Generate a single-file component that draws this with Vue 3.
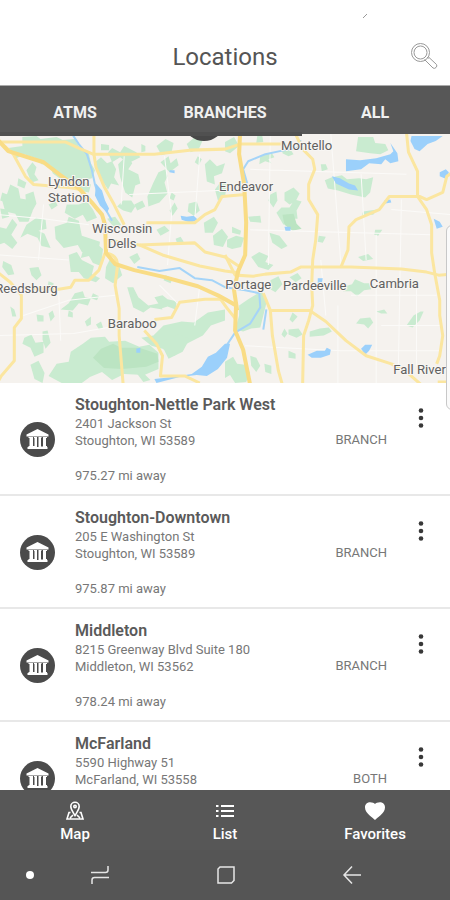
<template>
  <div class="app">
    <header class="header">
      <h1>Locations</h1>
      <button type="button" class="search-btn" aria-label="Search">
        <svg viewBox="0 0 28 28" width="28" height="28">
          <circle cx="10.500" cy="10.500" r="9" />
          <circle cx="10.500" cy="10.500" r="6.500" />
          <path d="M14.500 17.500l8.500 8.500q1.500 1 3-.5t.5-3L18 14.500M17 15l1.500 1.500" />
        </svg>
        <svg class="spark" viewBox="0 0 6 6" width="6" height="6"><path d="M1 5l4-4" /></svg>
      </button>
    </header>

    <nav class="tabs">
      <button v-for="tab in tabs" :key="tab" type="button" :class="{ active: tab === activeTab }" @click="activeTab = tab">
        {{ tab }}
      </button>
    </nav>

    <section class="map" aria-label="Map">
      <svg viewBox="0 0 450 247" preserveAspectRatio="xMidYMid slice">
        <rect width="450" height="249" fill="#f5f2ee" />
        <path v-for="(d, i) in woods" :key="'w' + i" class="wood" :d="d" />
        <path class="wood dark" d="M94 222l8-9 12-5 8 4 18 0 18 6 1 8-12 5-24 2-18-1zM282 80l11-1 3 10 5 5-9 2-8-6z" />
        <path class="minor" :d="minorRoads" />
        <path v-for="(d, i) in rivers" :key="'r' + i" class="river" :d="d" />
        <path v-for="(d, i) in lakes" :key="'l' + i" class="lake" :d="d" />
        <path v-for="(d, i) in roads" :key="'o' + i" class="road" :d="d" />
        <path v-for="(d, i) in highways" :key="'h' + i" class="highway" :d="d" />
        <g class="places">
          <text v-for="p in places" :key="p.name" :x="p.x" :y="p.y">{{ p.name }}</text>
        </g>
      </svg>
    </section>

    <ul class="list">
      <li v-for="item in locations" :key="item.name" class="row">
        <span class="badge">
          <svg viewBox="0 0 35 35" width="35" height="35">
            <circle cx="17.500" cy="17.500" r="17.500" fill="#4b4b4b" />
            <path fill="#fff" d="M17.500 7L28.500 12.500v2h-22v-2zM8.500 15h4.500v9h1v1H8.500v-1h1v-8h-1zM14 15h3v10h-3v-1h.5v-8H14zM18.500 15h3v1H21v8h.5v1h-3zM23 15h4v1h-1v8h1v1h-4.500v-1h.5zM7.500 25h20v2h-20z" />
          </svg>
        </span>
        <div class="info">
          <h2>{{ item.name }}</h2>
          <p>{{ item.street }}</p>
          <p>{{ item.city }}</p>
          <p v-if="item.distance" class="distance">{{ item.distance }} mi away</p>
        </div>
        <span class="type">{{ item.type }}</span>
        <button type="button" class="more" :aria-label="'Options for ' + item.name">
          <svg viewBox="0 0 6 20" width="6" height="20">
            <circle cx="3" cy="2.500" r="2.300" /><circle cx="3" cy="10" r="2.300" /><circle cx="3" cy="17.500" r="2.300" />
          </svg>
        </button>
      </li>
    </ul>

    <nav class="bottom-nav">
      <button type="button">
        <svg viewBox="0 0 20 20" width="20" height="20" fill="none" stroke="#fff" stroke-width="1.600">
          <path d="M10 14.500C8 11 5.800 8.500 5.800 5.500a4.200 4.200 0 0 1 8.400 0C14.200 8.500 12 11 10 14.500z" />
          <circle cx="10" cy="5.500" r="1.200" />
          <path d="M5.500 11.500H4L2 18h16l-2-6.500h-1.500M5 17l3-3M15 17l-3-3" />
        </svg>
        <span>Map</span>
      </button>
      <button type="button">
        <svg viewBox="0 0 20 20" width="20" height="20" fill="none" stroke="#fff" stroke-width="2">
          <path d="M1 5h2.500M1 10h2.500M1 15h2.500M6 5h13M6 10h13M6 15h13" />
        </svg>
        <span>List</span>
      </button>
      <button type="button">
        <svg viewBox="0 0 20 20" width="20" height="20" fill="#fff">
          <path d="M10 19C8.500 17 0 12.500 0 6.500 0 3.500 2 1.300 5 1.300c2.500 0 4 .7 5 1.700 1-1 2.500-1.700 5-1.700 3 0 5 2.200 5 5.200C20 12.500 11.500 17 10 19z" />
        </svg>
        <span>Favorites</span>
      </button>
    </nav>

    <div class="system-nav">
      <span class="dot"></span>
      <div class="keys">
        <button type="button" aria-label="Recent apps">
          <svg viewBox="0 0 20 20" width="20" height="20"><path d="M1 7.500h14.500q2.500 0 2.500-2.500V1M19 12.500H4.500Q2 12.500 2 15v4" /></svg>
        </button>
        <button type="button" aria-label="Home">
          <svg viewBox="0 0 20 20" width="20" height="20"><path d="M4 2h14v13.500L15.500 18H2V4z" /></svg>
        </button>
        <button type="button" aria-label="Back">
          <svg viewBox="0 0 20 20" width="20" height="20"><path d="M19 10H2M10 1.500L2 10l8 8.500" /></svg>
        </button>
      </div>
    </div>

    <div class="edge-handle"></div>
  </div>
</template>

<script setup>
import { ref } from 'vue';

const tabs = ['ATMS', 'BRANCHES', 'ALL'];
const activeTab = ref('BRANCHES');

const locations = [
  { name: 'Stoughton-Nettle Park West', street: '2401 Jackson St', city: 'Stoughton, WI 53589', distance: '975.27', type: 'BRANCH' },
  { name: 'Stoughton-Downtown', street: '205 E Washington St', city: 'Stoughton, WI 53589', distance: '975.87', type: 'BRANCH' },
  { name: 'Middleton', street: '8215 Greenway Blvd Suite 180', city: 'Middleton, WI 53562', distance: '978.24', type: 'BRANCH' },
  { name: 'McFarland', street: '5590 Highway 51', city: 'McFarland, WI 53558', type: 'BOTH' },
];

const places = [
  { name: 'Montello', x: 306, y: 16 },
  { name: 'Lyndon', x: 70, y: 52 },
  { name: 'Station', x: 70, y: 67 },
  { name: 'Endeavor', x: 246, y: 57 },
  { name: 'Wisconsin', x: 123, y: 98 },
  { name: 'Dells', x: 123, y: 113 },
  { name: 'Reedsburg', x: 28, y: 158 },
  { name: 'Portage', x: 248, y: 154 },
  { name: 'Pardeeville', x: 314, y: 155 },
  { name: 'Cambria', x: 393, y: 153 },
  { name: 'Baraboo', x: 133, y: 192 },
  { name: 'Fall River', x: 418, y: 238 },
];

const woods = [
  'M24 3l14-1 4 3 16-2 6 3 12-1 4 7 10 7 2 10 4 7-3 8-8 2-6 6-6-2-2-7-9 2-8-6-2-8-9-1-6-7-9-2-4-6z',
  'M10 14l14-2 8 6 10-2 6 6-10 2-12-4-8 4zM66 44l10-4 6 6 10 4-2 8-10-2-10-4z',
  'M12 50l8 4 2 10 6 1 6 12-4 10-9 0-4-8-10-2-3-11 5-7zM28 36l6-8 4 5-2 7 4 6-7 2z',
  'M27 60l8-3 3 12-5 9-5-4zM4 58l5 2-1 8-6-2zM20 44l8 4-2 6-7-3z',
  'M0 92l8 2 6-10 5 6-6 10 6 8-5 6-8-6-6 2zM2 74l7 1 2 7-7 2z',
  'M28 90l10-7 9 2 1 9-8 2 6 3 6 14-9-2-4-8-10-4-7 4z',
  'M56 92l12-4 2-6 10 4 3 15 18 6-2 12-16-2-4-7-14 3-8-9zM50 70l7-3 2 4-6 4z',
  'M68 70l12 0 8-3 6 8 4 8-10 4-4-7-8 4-10-6z',
  'M96 28l6-5 6 6 5-2 4 8-2 8 5 8-8-2-3 6-7-10z',
  'M119 30l9-9 5 8-4 6 10 5 2 9-5 2-3 12-7-5-5-15z',
  'M109 18l4-4 8 4 4-6 12 6 4 5-12 6-8-6-8 5zM102 10l8 1 0 5-8 0z',
  'M157 12l9-7 8 4-2 9-10 3z',
  'M148 62l6-14 5-10 7-3 2 7-3 6 3 11-8 9-11 4z',
  'M161 28l8-6 2 7 6-5 2 7-9 7z',
  'M187 10l7-6 9 2-4 9-8 3zM142 10l4 2 0 5-4 1zM172 58l4 3-2 5-4-2z',
  'M205 30l5-5 7 7 8-3-3 10-8 3 1 8-8-3zM198 22l4 3-3 6-4-3z',
  'M189 69l8-2 3 9-6 5-6-4z',
  'M215 55l6-8 6 3-2 12-7 4z',
  'M204 88l10-6 4 6-5 10-8 0z',
  'M213 101l9-7 6 8-5 10-9-2zM176 104l5-2 3 5-6 3z',
  'M118 72l6-6 8 0 4 6-4 6-8-2zM135 70l8-4 3 6-8 4zM157 95l8-4 5 5-9 5zM170 76l5-8 3 6-5 7z',
  'M84 116l10-10 10 8-2 17-8-3-4-7-8 2zM108 84l8-2 6 8-6 4z',
  'M111 124l8 4 4 12-9 8-8-5 1-11zM130 122l8-4 3 6-6 5z',
  'M70 120l8-3 5 8 12 6-2 8 8 4-4 4-12-4-5-6-8 0z',
  'M76 158l8-2 2 6 6 1-3 7-9-2-6 7-12-1 8-6zM94 158l6 3-2 4-6-2z',
  'M128 152l6 0 5 10 10 8 11-2 3 6-12-2-7 5-10-5z',
  'M155 162l8-2 5 4 9 2-1 8-8-3-6 2zM166 140l7 3-2 5-7-3z',
  'M5 126l8 4 3 9-6 1-6-8zM31 133l9-1 3 8-5 5-5-5zM50 146l5 2-1 6-5-3z',
  'M26 202l7-3 4 8 8-1 0 11-9 4-4-9-8-4zM44 196l5-1 3 12-5 6-3-9zM38 179l7 1 0 6-6 0zM50 178l4-3 2 6-4 5z',
  'M32 229l8-4 6 12-2 10-8-4zM12 171l4 3 2 7-4 0zM70 175l4 2 0 5-5-1z',
  'M50 240l8-12 12-2 2-10 12-8 8-6 14-1 4 5 16-1 14 6 10-2 9 8 0 16-14 6-20-1-12 6-10-8-12 5-8 6-20 0z',
  'M142 202l12-2 10-10 18-4 12 1 14-10 17-3 0 11-14 5-8 10-16 8-12 12-12-7-11-3z',
  'M161 207l18-8 11 4-7 13-14 7zM138 238l5-2 8 8-7 2z',
  'M86 186l6-5 0 8-4 2zM97 189l5-3 2 6-4 2z',
  'M251 122l8-5 9 4-3 6 8 3-5 5-10-3z',
  'M239 170l9-6 13-8 6 8-3 12-4 16-9 1-8 3-8-2 4-14z',
  'M225 226l8-5 4 7 8 1 5 8-4 9-11 1-5-8-5 3zM250 220l6 2 4 8-4 6-5-6z',
  'M270 145l8-4 4 8-7 8-5-3zM289 142l8-4 4 5-6 4z',
  'M273 73l-5-7 2-6 6-3 1 9z',
  'M284 58l9-5 6 6-4 8-6 3-5-4z',
  'M276 78l5-5 8 0 5-8 7 2-5 9 1 8-8 0-6 6z',
  'M269 98l10 3 8 10-6 3-9-6z',
  'M248 82l12-1 1 7-11-1zM232 92l9 4-1 4-8-2z',
  'M227 105l9-4 8 2-3 9-9 2-5-2z',
  'M260 22l11-4 3 5-6 2 3 4-6-2-6 3zM282 12l7 2 4 6-5 2-6-3zM320 30l5 0 2 5-6 2z',
  'M357 3l15 0 2 6 10 1 3 6-8 4-10-1-14-2z',
  'M331 43l10-2 5 4 12-1 7 1 7-2-3 15-5 5-14-3-13-4-10-2-3-8z',
  'M318 101l7 1-3 6-5-1zM374 95l7 0-4 6-4-1zM357 122l10-3 5 5-10 2z',
  'M344 151l7-2 3-5 9 4 5 0 2 6-7 1-7 6-6-5-8 0z',
  'M405 190l7-10 7-4 3 0-4 9-7 7z',
  'M359 183l10-1 3 5-5 6-4-4-8-1zM375 176l8-2 3 4-6 0z',
  'M288 194l10-1 4 6-6 3-8-3zM309 196l10-3 9-1 3 4-8 4-14 1z',
  'M284 193l3 5-3 4-3-3zM292 177l5 4-5 6-3-3zM288 215l7 3 0 5-7-1zM264 228l7 2 0 8-6-2z',
  'M362 77l14-2-4 5-11 0zM257 2l5 0 1 6-7 1zM225 8l9-5 5 9-9 7-5-2z',
];

const rivers = [
  'M72 -2L80 10 88 20 93 36 96 50 100 62',
  'M106 74L113 86M138 132L160 136 180 133 195 143 212 145 225 152 245 155 259 158 260 172 250 188 235 197 225 212 210 228',
  'M300 6L297 14 284 16 265 20 248 27 243 35 247 49',
  'M266 174L263 194',
];

const lakes = [
  'M97 49l6 7 3 10 4 8-2 4-7-7-5-10z',
  'M345 25l14 1 16-2 14-4 3-3-3-8 7 10 1 8-8 2-5-4-4 5-12-1-8 6-15 2z',
  'M410 2l31 0-7 5-8 3-8 7-5-2-4-8z',
  'M331 42l8 2 9 5 6 2 3 5-9-1-13-6z',
  'M181 81l6 1 7-1 4 4-7 3-9-3z',
  'M192 238l10-7 6-10 8-4 9-9 5 0-3 14-9 11-11 7-10-1-17 2-23 6-2-4 18-2z',
  'M307 219l9-4 8 0 2-3 4 2-1 5-9 3-9 0z',
  'M360 213l4-4 7 0-3 6-4 4z',
  'M438 38l6-3 3 3-2 7-7-3zM432 84l6 3 3 5-6 2zM170 36l5 0 0 3-5-1zM383 66l6-1 1 3-6 1z',
  'M284 92l6 0 0 4-5 0zM317 143l5 0-1 6-4 0zM137 213l4-1 0 5-4 0z',
];

const highways = [
  'M-2 4L10 17 45 28 62 41 80 54 93 68 103 80 106 90 107 118 116 129 135 135 165 142 198 151 218 160 236 170 235 195 243 214 250 249',
  'M240 -2L239 20 244 50 246 88 245 120 238 136 234 155 237 175',
];

const roads = [
  'M0 6L15 20 27 42 35 50 70 53 82 55 99 76',
  'M-2 8H67L80 14 94 20H155L190 16 225 15 240 10H285',
  'M95 -2L95 20 97 33 105 52 115 70 125 90',
  'M147 88H195L205 80 215 75 222 62 245 60',
  'M107 105L140 110 195 108 205 117 225 122 240 132',
  'M140 110L163 120 200 131 225 136 240 138',
  'M294 -2L302 15 312 25 314 35 308 50 308 65 317 80 315 105 312 125 311 150 312 170 308 185 303 200 302 249',
  'M405 -2L407 18 416 37 416 62 425 75 430 90 430 118 433 138 438 165 438 180 441 200 438 220 435 228',
  'M452 37L445 42 441 58 425 65 418 62 388 62 378 75 355 85 348 92 347 115 340 132',
  'M106 118L100 135 90 145 76 145 72 152 60 154 35 153M-2 136L12 147 23 160 23 183 16 192 16 225 3 240 -2 249',
  'M107 118Q120 120 118 134L116 150 120 173 120 200 124 249',
  'M155 184L172 182 180 167 205 164 225 164',
  'M145 195L157 208 163 220 161 240 185 240 200 247',
  'M225 120L235 140 253 141 265 139 290 137 300 132H350L400 134 425 137 437 140 449 139',
  'M263 158L270 175 272 200 278 235 282 249',
  'M270 175H309L325 186 345 205 365 220 390 228 405 236 420 249',
  'M218 160Q226 172 236 184M436 246H447',
];

const minorRoads =
  'M0 80L45 84 90 90M45 70L40 125M125 22L122 70M165 22L172 80 168 130M200 20L195 85M130 60L240 55M250 35L405 40M270 0L268 130M330 0L340 130M360 40L365 125M250 95L430 100M450 80L390 75M375 100V247M400 65L397 230M320 125L325 180M337 170V247M350 160H435M245 210L340 215M380 190H440M0 200L75 198 120 190M60 155L62 205M200 150L195 190M25 180L70 165 116 160M180 170L160 150M415 145V230M340 215H440M0 120L70 125';
</script>

<style>
body { margin: 0; background: #fff; }
</style>

<style scoped>
* { box-sizing: border-box; }
.app { position: relative; display: flex; flex-direction: column; height: 100vh; overflow: hidden; background: #fff; font-family: Roboto, sans-serif; color: #555; }
button { border: 0; padding: 0; background: none; font-family: inherit; color: inherit; cursor: pointer; }
svg { display: block; }

.header { position: relative; flex: none; height: 86px; padding-top: 28px; border-bottom: 1px solid #aaa; }
.header h1 { margin: 0; font-size: 24px; line-height: 58px; font-weight: 400; text-align: center; color: #555; }
.search-btn { position: absolute; right: 12px; top: 42px; }
.search-btn svg { fill: none; stroke: #999; stroke-width: 1; }
.search-btn .spark { position: absolute; right: 70px; top: -29px; }

.tabs { position: relative; z-index: 1; flex: none; display: flex; height: 48px; background: #575757; }
.tabs::after { content: ''; position: absolute; left: 0; top: 46px; width: 67%; height: 4px; background: #505050; }
.tabs button { flex: 1; padding-top: 4px; font-size: 16px; font-weight: 700; color: #f0f0f0; }
.tabs .active { position: relative; }
.tabs .active::after { content: ''; position: absolute; left: 36px; top: 26px; width: 36px; height: 29px; border-radius: 50%; background: #484848; clip-path: inset(23px 0 0 0); }

.map { flex: none; }
.map svg { width: 100%; height: 249px; }
.minor { fill: none; stroke: #fbfaf8; stroke-width: 1; }
.wood { fill: #c9ebd0; }
.wood.dark { fill: #bbe4c2; }
.lake { fill: #9bd0fb; }
.river { fill: none; stroke: #a5d4f8; stroke-width: 2; stroke-linejoin: round; }
.road { fill: none; stroke: #fbe6a0; stroke-width: 3; stroke-linejoin: round; }
.highway { fill: none; stroke: #f9dc85; stroke-width: 4; stroke-linejoin: round; }
.places { font-size: 13px; fill: #606060; text-anchor: middle; stroke: #f8f6f3; stroke-width: 2px; paint-order: stroke; }

.list { flex: 1; min-height: 0; margin: 0; padding: 0; overflow: hidden; list-style: none; }
.row { display: grid; grid-template-columns: 75px 1fr auto 63px; align-items: center; padding: 12px 0 10px; border-bottom: 2px solid #e8e8e8; }
.badge { padding-left: 20px; }
.info { min-height: 89px; }
.info h2 { margin: 0; font-size: 16px; line-height: 20px; font-weight: 600; color: #5a5a5a; }
.info p { margin: 0; font-size: 13px; line-height: 17px; color: #777; }
.info .distance { margin-top: 18px; }
.type { font-size: 13px; color: #777; }
.more { align-self: start; justify-self: center; margin-top: 13px; margin-left: 5px; fill: #383838; }

.bottom-nav { flex: none; display: flex; height: 60px; background: #575757; color: #fff; }
.bottom-nav button { flex: 1; display: flex; flex-direction: column; align-items: center; gap: 4px; padding-top: 11px; font-size: 15px; line-height: 18px; font-weight: 500; }

.system-nav { flex: none; display: flex; align-items: center; height: 50px; background: #555; }
.dot { width: 8px; height: 8px; margin-left: 26px; border-radius: 50%; background: #fff; }
.keys { flex: 1; display: flex; justify-content: space-between; padding: 0 88px 0 56px; }
.keys svg { fill: none; stroke: #e6e6e6; stroke-width: 1.5; }

.edge-handle { position: absolute; right: -8px; top: 225px; width: 12px; height: 185px; border: 1px solid #c8c8c8; border-radius: 6px; background: #fafafa; }
</style>
